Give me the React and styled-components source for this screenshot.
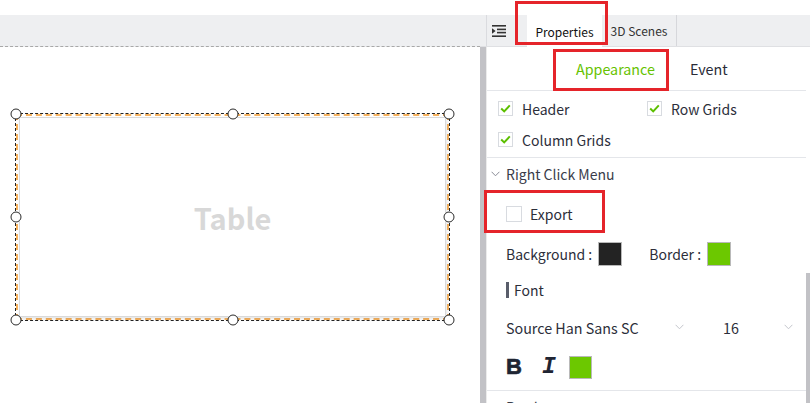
import React from 'react';
import styled, { createGlobalStyle } from 'styled-components';

const Global = createGlobalStyle`
  html, body { margin: 0; padding: 0; background: #fff; }
  body { font-family: "Noto Sans CJK SC", "Noto Sans", sans-serif; }
  * { box-sizing: border-box; }
`;

const Page = styled.div`
  position: relative;
  width: 810px;
  height: 403px;
  overflow: hidden;
  display: flex;
  flex-direction: column;
  background: #fff;
`;
const TopStrip = styled.div`
  height: 15px;
  flex: none;
`;
const Body = styled.div`
  flex: 1;
  display: flex;
  min-height: 0;
`;

/* ---------- left canvas ---------- */
const LeftPane = styled.div`
  width: 480px;
  flex: none;
  display: flex;
  flex-direction: column;
`;
const Toolbar = styled.div`
  height: 32px;
  flex: none;
  background: #eeeff1;
  border-bottom: 1px dashed #a8a8a8;
`;
const Canvas = styled.div`
  position: relative;
  flex: 1;
  background: #fff;
`;
const Widget = styled.div`
  position: absolute;
  left: 15px;
  top: 66px;
  width: 435px;
  height: 208px;
  border: 1px dashed #222;
`;
const OrangeFrame = styled.div`
  position: absolute;
  inset: 0;
  border: 2px dashed #f6b25e;
`;
const TableBox = styled.div`
  position: absolute;
  inset: 3px;
  border: 1px solid #d9d9d9;
  box-shadow: 1px 2px 3px rgba(0, 0, 0, 0.1);
  display: flex;
  align-items: center;
  justify-content: center;
  font-family: "Noto Sans CJK SC", "Noto Sans", sans-serif;
  font-weight: 700;
  font-size: 29px;
  color: #d8d8d8;
`;
const Handle = styled.div`
  position: absolute;
  left: ${(p) => p.$x}%;
  top: ${(p) => p.$y}%;
  width: 11px;
  height: 11px;
  border-radius: 50%;
  border: 1px solid #2a2a2a;
  background: #fff;
  transform: translate(-50%, -50%);
`;

/* ---------- right panel ---------- */
const RightPane = styled.div`
  width: 330px;
  flex: none;
  display: flex;
  flex-direction: column;
`;
const TabBar = styled.div`
  height: 32px;
  flex: none;
  display: flex;
  padding-left: 6px;
  background: #eeeff1;
  border-bottom: 1px solid #dfe0e3;
`;
const IconButton = styled.div`
  width: 41px;
  border-left: 1px solid #dadbdf;
  display: flex;
  align-items: center;
  padding-left: 5px;
  color: #333;
`;
const Tab = styled.div`
  width: ${(p) => p.$w}px;
  display: flex;
  align-items: center;
  justify-content: center;
  font-size: 12px;
  color: ${(p) => (p.$active ? '#111' : '#333')};
  background: ${(p) => (p.$active ? '#fff' : 'transparent')};
  margin-bottom: ${(p) => (p.$active ? '-1px' : '0')};
  border-right: ${(p) => (p.$active ? 'none' : '1px solid #d6d7db')};
`;
const ContentRow = styled.div`
  flex: 1;
  display: flex;
  min-height: 0;
`;
const SideScroll = styled.div`
  width: 6px;
  flex: none;
  background: #c2c2c6;
`;
const Panel = styled.div`
  flex: 1;
  display: flex;
  min-width: 0;
  border-left: 1px solid #ebebeb;
`;
const PanelInner = styled.div`
  flex: 1;
  display: flex;
  flex-direction: column;
  min-width: 0;
`;
const ScrollTrack = styled.div`
  width: 4px;
  flex: none;
  padding-top: 226px;
  display: flex;
`;
const ScrollThumb = styled.div`
  flex: 1;
  background: #c2c2c6;
`;

const SubTabs = styled.div`
  height: 44px;
  flex: none;
  display: flex;
  padding-left: 89px;
  gap: 35px;
  border-bottom: 1px solid #e4e6ea;
`;
const SubTab = styled.div`
  display: flex;
  align-items: center;
  font-size: 14.3px;
  padding-top: 1px;
  color: ${(p) => (p.$active ? '#66c200' : '#2a2c38')};
  border-bottom: 2px solid ${(p) => (p.$active ? '#b3740e' : 'transparent')};
  margin-bottom: -1px;
`;

const CheckGrid = styled.div`
  flex: none;
  display: grid;
  grid-template-columns: 149px 1fr;
  grid-auto-rows: 31px;
  padding: 2px 0 2px 11px;
  border-bottom: 1px solid #e4e6ea;
`;
const CheckItem = styled.label`
  display: flex;
  align-items: center;
  gap: ${(p) => p.$gap || 9}px;
  font-size: 14px;
  color: #2c2e3a;
`;
const Box = styled.span`
  width: ${(p) => p.$size}px;
  height: ${(p) => p.$size}px;
  flex: none;
  border: 1px solid #d8dbe0;
  background: #fff;
  display: flex;
  align-items: center;
  justify-content: center;
`;

const SectionHeader = styled.div`
  height: 32px;
  flex: none;
  display: flex;
  align-items: center;
  gap: 6px;
  padding-left: 4px;
  font-size: 14px;
  color: #3a3c4a;
`;
const Row = styled.div`
  height: ${(p) => p.$h}px;
  flex: none;
  display: flex;
  align-items: center;
  padding-left: 19px;
  font-size: 14px;
  color: #2c2e3a;
  border-bottom: ${(p) => (p.$divider ? '1px solid #e4e6ea' : 'none')};
`;
const Field = styled.div`
  display: flex;
  align-items: center;
  gap: 6px;
  margin-right: ${(p) => p.$mr || 0}px;
`;
const Swatch = styled.span`
  width: ${(p) => p.$size || 24}px;
  height: ${(p) => p.$size || 24}px;
  background: ${(p) => p.$color};
  border: 1px solid #b9b9b9;
  margin-left: ${(p) => p.$ml || 0}px;
`;
const TitleBar = styled.span`
  width: 3px;
  height: 16px;
  background: #595d6a;
  margin-right: 5px;
`;
const Select = styled.div`
  width: ${(p) => p.$w}px;
  margin-right: ${(p) => p.$mr || 0}px;
  display: flex;
  align-items: center;
  justify-content: space-between;
  padding-right: ${(p) => p.$pr}px;
  font-size: 14.3px;
  color: #2c2e3a;
`;
const BoldBtn = styled.span`
  font-family: "Liberation Sans", Arial, sans-serif;
  font-weight: 900;
  font-size: 22px;
  color: #1f2533;
  width: 36px;
  -webkit-text-stroke: 0.6px #1f2533;
`;
const ItalicBtn = styled.span`
  font-family: "Liberation Mono", "DejaVu Sans Mono", monospace;
  font-style: italic;
  font-weight: 700;
  font-size: 23px;
  color: #1f2533;
  width: 27px;
`;

const Annot = styled.div`
  position: absolute;
  left: ${(p) => p.$x}px;
  top: ${(p) => p.$y}px;
  width: ${(p) => p.$w}px;
  height: ${(p) => p.$h}px;
  border: 3px solid #e5242a;
  pointer-events: none;
`;

const Check = () => (
  <svg width="11" height="9" viewBox="0 0 11 9">
    <path d="M1.2 4.6 L4.2 7.4 L9.8 1.4" fill="none" stroke="#5cbf00" strokeWidth="2" />
  </svg>
);
const Chevron = ({ color = '#8a8c96', w = 9 }) => (
  <svg width={w} height="6" viewBox="0 0 9 6">
    <path d="M0.6 0.8 L4.5 4.8 L8.4 0.8" fill="none" stroke={color} strokeWidth="1" />
  </svg>
);
const IndentIcon = () => (
  <svg width="14" height="12" viewBox="0 0 14 12">
    <rect x="0" y="0" width="14" height="1.6" fill="#333" />
    <rect x="5" y="3.6" width="9" height="1.6" fill="#333" />
    <rect x="5" y="6.8" width="9" height="1.6" fill="#333" />
    <rect x="0" y="10.4" width="14" height="1.6" fill="#333" />
    <path d="M0 3.2 L3.6 6 L0 8.8 Z" fill="#333" />
  </svg>
);

const handles = [
  [0, 0], [50, 0], [100, 0],
  [0, 50], [100, 50],
  [0, 100], [50, 100], [100, 100],
];

export default function App() {
  return (
    <>
      <Global />
      <Page>
        <TopStrip />
        <Body>
          <LeftPane>
            <Toolbar />
            <Canvas>
              <Widget>
                <OrangeFrame />
                <TableBox>Table</TableBox>
                {handles.map(([x, y]) => (
                  <Handle key={`${x}-${y}`} $x={x} $y={y} />
                ))}
              </Widget>
            </Canvas>
          </LeftPane>
          <RightPane>
            <TabBar>
              <IconButton>
                <IndentIcon />
              </IconButton>
              <Tab $w={75} $active>Properties</Tab>
              <Tab $w={75}>3D Scenes</Tab>
            </TabBar>
            <ContentRow>
              <SideScroll />
              <Panel>
                <PanelInner>
                  <SubTabs>
                    <SubTab $active>Appearance</SubTab>
                    <SubTab>Event</SubTab>
                  </SubTabs>
                  <CheckGrid>
                    <CheckItem>
                      <Box $size={15}><Check /></Box>Header
                    </CheckItem>
                    <CheckItem>
                      <Box $size={15}><Check /></Box>Row Grids
                    </CheckItem>
                    <CheckItem>
                      <Box $size={15}><Check /></Box>Column Grids
                    </CheckItem>
                  </CheckGrid>
                  <SectionHeader>
                    <Chevron />
                    Right Click Menu
                  </SectionHeader>
                  <Row $h={48}>
                    <CheckItem $gap={8}>
                      <Box $size={16} />Export
                    </CheckItem>
                  </Row>
                  <Row $h={32}>
                    <Field $mr={27}>
                      Background :<Swatch $color="#232323" />
                    </Field>
                    <Field>
                      Border :<Swatch $color="#6cc800" />
                    </Field>
                  </Row>
                  <Row $h={40}>
                    <TitleBar />
                    Font
                  </Row>
                  <Row $h={34}>
                    <Select $w={185} $pr={7} $mr={32}>
                      Source Han Sans SC
                      <Chevron color="#c4c6cc" />
                    </Select>
                    <Select $w={76} $pr={6}>
                      16
                      <Chevron color="#c4c6cc" />
                    </Select>
                  </Row>
                  <Row $h={47} $divider>
                    <BoldBtn>B</BoldBtn>
                    <ItalicBtn>I</ItalicBtn>
                    <Swatch $color="#6cc800" $size={23} />
                  </Row>
                  <SectionHeader>
                    <Chevron />
                    Border
                  </SectionHeader>
                </PanelInner>
                <ScrollTrack>
                  <ScrollThumb />
                </ScrollTrack>
              </Panel>
            </ContentRow>
          </RightPane>
        </Body>
        <Annot $x={515} $y={1} $w={93} $h={44} />
        <Annot $x={553} $y={49} $w={116} $h={42} />
        <Annot $x={484} $y={190} $w={121} $h={43} />
      </Page>
    </>
  );
}
